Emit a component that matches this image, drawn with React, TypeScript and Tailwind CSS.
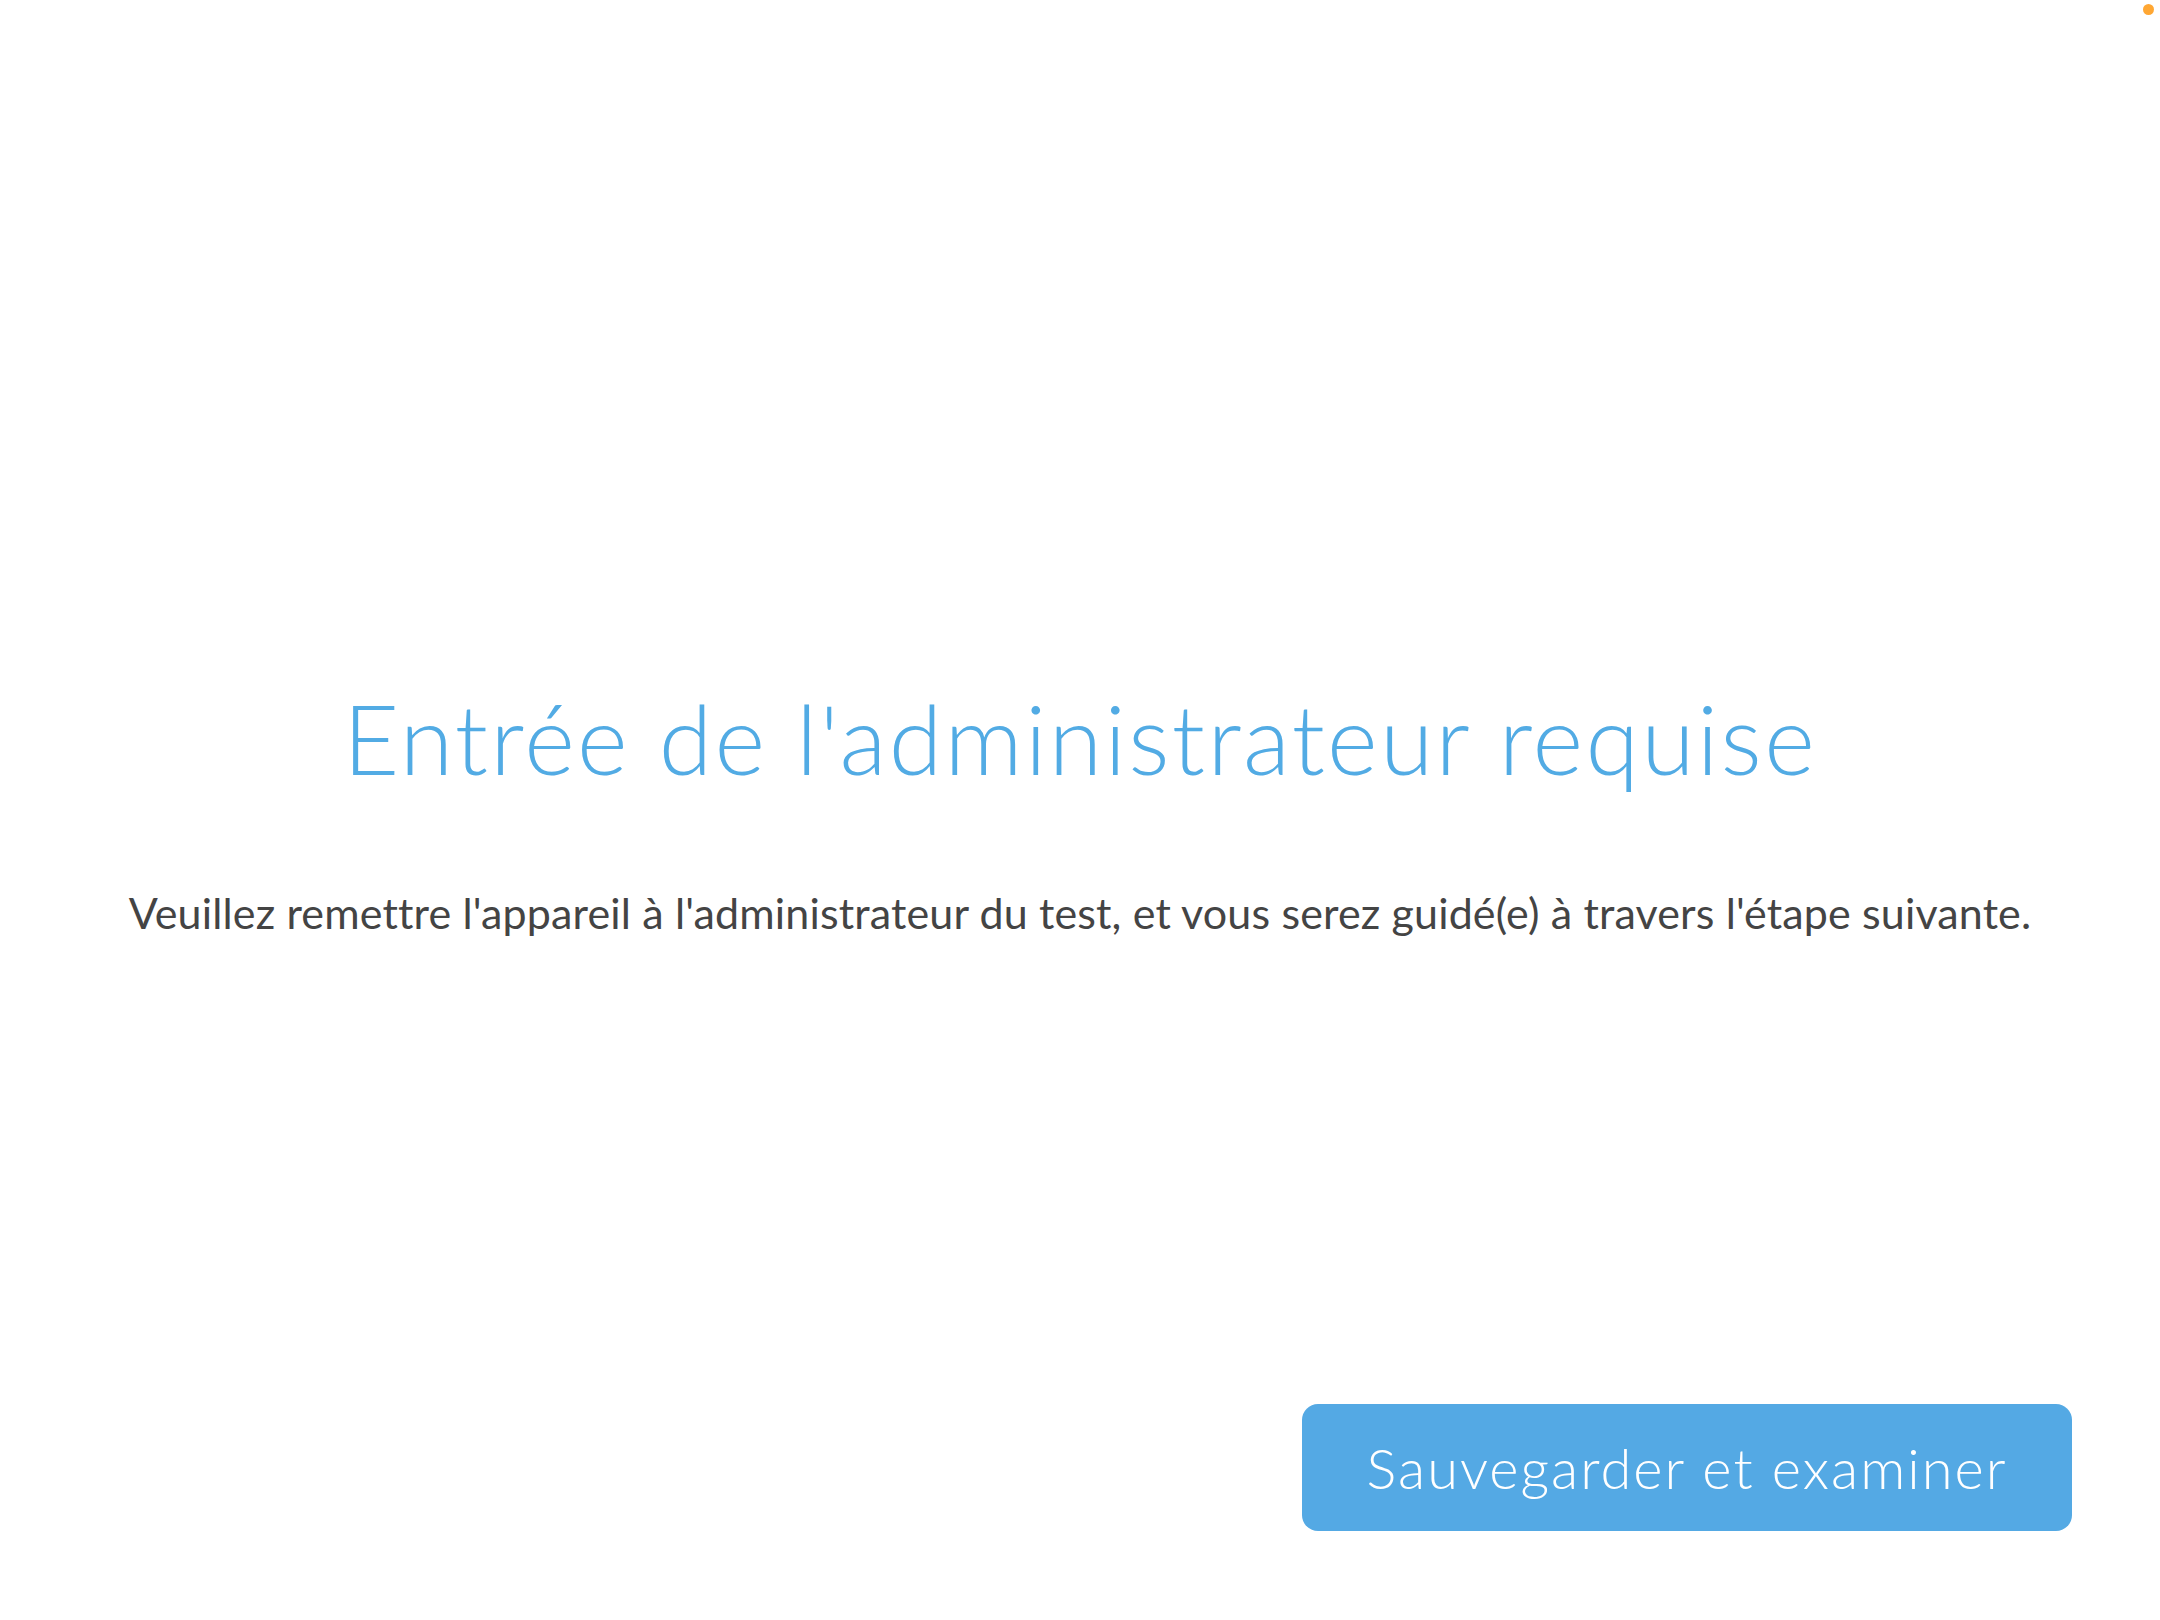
import React from "react";

export default function App() {
  return (
    <div className="relative w-[2160px] h-[1620px] bg-white overflow-hidden flex flex-col">
      <div className="absolute right-[6px] top-[4px] w-[11px] h-[11px] rounded-full bg-[#ffa733]" />
      <div className="flex flex-col items-center pt-[680px]">
        <h1
          className="text-[97px] leading-[1.2] font-light text-[#52abe4] tracking-[2.3px] whitespace-nowrap"
          style={{ fontFamily: "Lato, 'Open Sans', sans-serif" }}
        >
          Entrée de l'administrateur requise
        </h1>
        <p
          className="mt-[91px] text-[43px] leading-[1.2] text-[#444444] tracking-[0.15px] whitespace-nowrap"
          style={{ fontFamily: "Lato, 'Open Sans', sans-serif" }}
        >
          Veuillez remettre l'appareil à l'administrateur du test, et vous serez guidé(e) à travers l'étape suivante.
        </p>
      </div>
      <div className="mt-auto self-end mr-[88px] mb-[89px]">
        <button
          className="w-[770px] h-[127px] rounded-[16px] bg-[#54a9e4] text-white text-[56px] font-light tracking-[2px] flex items-center justify-center"
          style={{ fontFamily: "Lato, 'Open Sans', sans-serif" }}
        >
          Sauvegarder et examiner
        </button>
      </div>
    </div>
  );
}
